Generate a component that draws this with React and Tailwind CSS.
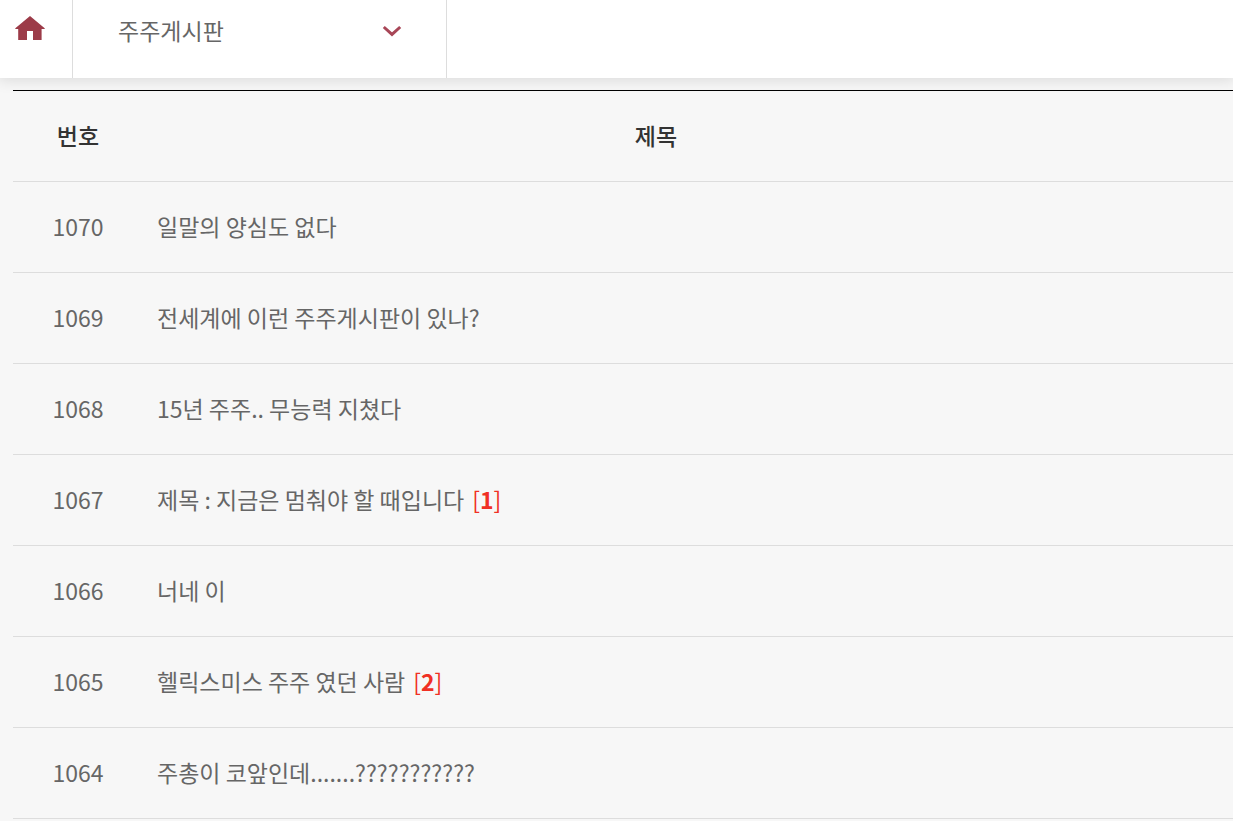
const posts = [
  { id: 1070, title: '일말의 양심도 없다' },
  { id: 1069, title: '전세계에 이런 주주게시판이 있나?' },
  { id: 1068, title: '15년 주주.. 무능력 지쳤다' },
  { id: 1067, title: '제목 : 지금은 멈춰야 할 때입니다', replies: 1 },
  { id: 1066, title: '너네 이' },
  { id: 1065, title: '헬릭스미스 주주 였던 사람', replies: 2 },
  { id: 1064, title: '주총이 코앞인데.......???????????' },
];

function HomeIcon() {
  return (
    <svg viewBox="0 0 30 24" className="h-6 w-[30px]" fill="#9c3b48" aria-hidden="true">
      <path d="M15 0 29.7 12.2V13H26.6V24H18V15H12V24H3.2V13H.3V12.2Z" />
    </svg>
  );
}

function ChevronIcon() {
  return (
    <svg viewBox="0 0 20 14" className="h-[14px] w-5" fill="none" stroke="#a84657" strokeWidth="3" aria-hidden="true">
      <path d="M1.8 3 10 10.4 18.2 3" />
    </svg>
  );
}

export default function App() {
  return (
    <div className="min-h-screen bg-[#f7f7f7] font-['Noto_Sans_CJK_KR',sans-serif] text-[23px] leading-9 text-[#666]">
      <nav className="flex h-[78px] bg-white shadow-[0_0_14px_2px_rgba(0,0,0,0.12)]">
        <a href="#home" aria-label="홈" className="flex w-[73px] justify-center border-r border-[#ddd] pr-3 pt-4">
          <HomeIcon />
        </a>
        <button type="button" className="flex w-[374px] items-start justify-between border-r border-[#ddd] pl-[45px] pr-11 pt-3">
          <span>주주게시판</span>
          <span className="pt-3">
            <ChevronIcon />
          </span>
        </button>
      </nav>
      <main className="overflow-hidden pl-[13px] pt-3">
        <table className="w-full table-fixed border-collapse border-t border-black">
          <thead>
            <tr className="h-[91px] border-b border-[#ddd] text-[#333]">
              <th scope="col" className="w-[130px] p-0 pb-0.5 font-medium">번호</th>
              <th scope="col" className="p-0 pb-0.5 pr-16 font-medium">제목</th>
            </tr>
          </thead>
          <tbody>
            {posts.map((post) => (
              <tr key={post.id} className="h-[91px] border-b border-[#ddd]">
                <td className="p-0 pb-0.5 text-center">{post.id}</td>
                <td className="p-0 pb-0.5 pl-[14px]">
                  <a href={`#${post.id}`}>{post.title}</a>
                  {post.replies && (
                    <span className="ml-2 text-[#f03024]">[<b>{post.replies}</b>]</span>
                  )}
                </td>
              </tr>
            ))}
          </tbody>
        </table>
      </main>
    </div>
  );
}
